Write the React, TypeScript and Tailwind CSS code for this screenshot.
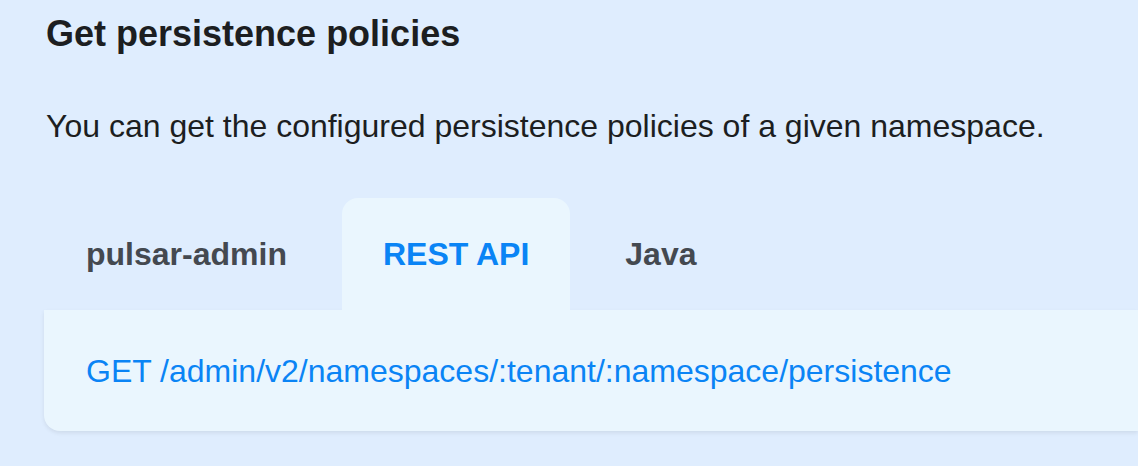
export default function App() {
  const tabs = ["pulsar-admin", "REST API", "Java"];
  const active = "REST API";

  return (
    <div
      className="h-[466px] w-[1138px] overflow-hidden bg-[#dfedfe] pl-[46px] text-[#1c1e21]"
      style={{ fontFamily: '"Liberation Sans", Arial, sans-serif' }}
    >
      <h2 className="pt-[12px] text-[36px] font-bold leading-[44px]">Get persistence policies</h2>
      <p className="mt-[46px] text-[32px] leading-[48px]">
        You can get the configured persistence policies of a given namespace.
      </p>

      <div className="mt-[48px]">
        <ul className="-ml-[1px] flex">
          {tabs.map((t) => (
            <li
              key={t}
              className={`mr-[14px] flex h-[112px] items-center rounded-t-[16px] px-[41px] text-[32px] font-bold ${
                t === active ? "bg-[#eaf6fe] text-[#0a84f5]" : "text-[#444950]"
              }`}
            >
              {t}
            </li>
          ))}
        </ul>
        <div className="-ml-[2px] flex h-[121px] items-center rounded-bl-[16px] bg-[#eaf6fe] pl-[42px] shadow-[0_2px_4px_rgba(0,0,0,0.08)]">
          <span className="text-[32px] text-[#0a84f5]">
            GET /admin/v2/namespaces/:tenant/:namespace/persistence
          </span>
        </div>
      </div>
    </div>
  );
}
